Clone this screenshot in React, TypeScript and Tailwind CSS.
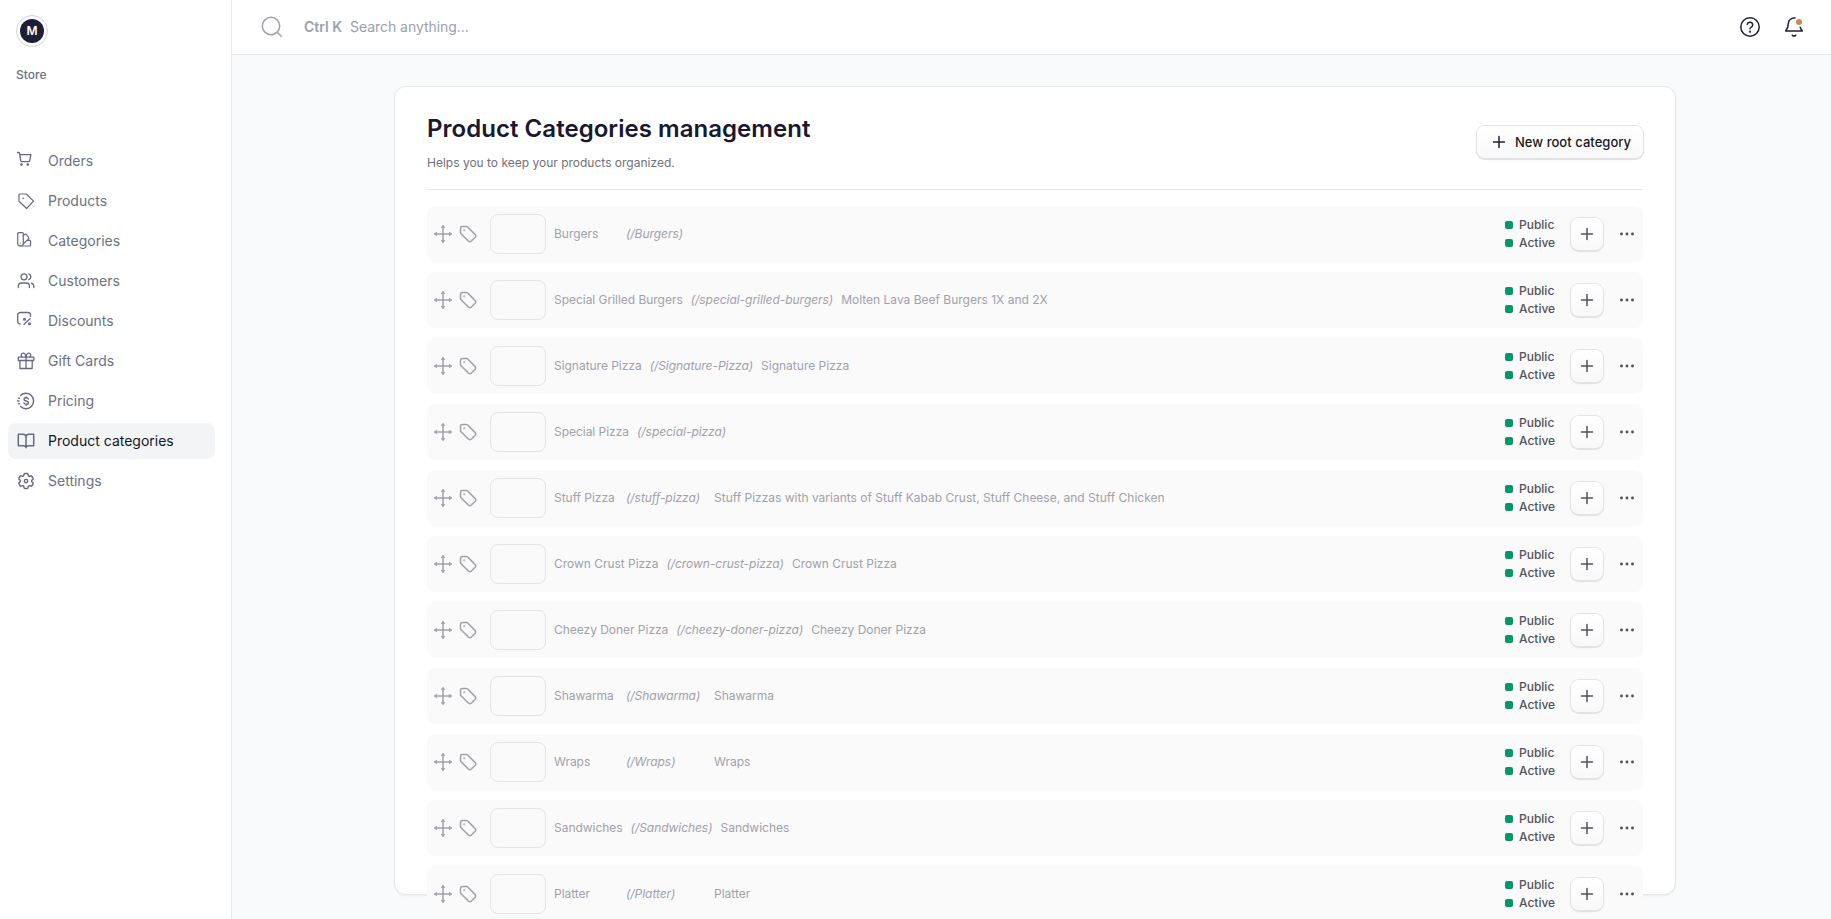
import type { ReactNode } from 'react';

interface Category {
  name: string;
  handle: string;
  description?: string;
}

const CATEGORIES: Category[] = [
  { name: 'Burgers', handle: 'Burgers' },
  { name: 'Special Grilled Burgers', handle: 'special-grilled-burgers', description: 'Molten Lava Beef Burgers 1X and 2X' },
  { name: 'Signature Pizza', handle: 'Signature-Pizza', description: 'Signature Pizza' },
  { name: 'Special Pizza', handle: 'special-pizza' },
  {
    name: 'Stuff Pizza',
    handle: 'stuff-pizza',
    description: 'Stuff Pizzas with variants of Stuff Kabab Crust, Stuff Cheese, and Stuff Chicken',
  },
  { name: 'Crown Crust Pizza', handle: 'crown-crust-pizza', description: 'Crown Crust Pizza' },
  { name: 'Cheezy Doner Pizza', handle: 'cheezy-doner-pizza', description: 'Cheezy Doner Pizza' },
  { name: 'Shawarma', handle: 'Shawarma', description: 'Shawarma' },
  { name: 'Wraps', handle: 'Wraps', description: 'Wraps' },
  { name: 'Sandwiches', handle: 'Sandwiches', description: 'Sandwiches' },
  { name: 'Platter', handle: 'Platter', description: 'Platter' },
];

interface IconProps {
  size?: number;
  viewBox?: string;
  strokeWidth?: number;
  className?: string;
  children: ReactNode;
}

function Icon({ size = 20, viewBox = '0 0 20 20', strokeWidth = 1.5, className = '', children }: IconProps) {
  return (
    <svg
      width={size}
      height={size}
      viewBox={viewBox}
      fill="none"
      stroke="currentColor"
      strokeWidth={strokeWidth}
      strokeLinecap="round"
      strokeLinejoin="round"
      className={`shrink-0 ${className}`}
    >
      {children}
    </svg>
  );
}

const NAV_ITEMS: { label: string; icon: ReactNode; active?: boolean }[] = [
  {
    label: 'Orders',
    icon: (
      <Icon strokeWidth={1.3}>
        <path d="M1.5 1.5h1.200c.4 0 .7.3.8.7L4.800 9.800c.1.5.5.800 1 .8h6.800c.5 0 .9-.3 1-.8l1.300-6.100H3.800" />
        <circle cx="5.500" cy="13.500" r=".7" fill="currentColor" />
        <circle cx="11.800" cy="13.500" r=".7" fill="currentColor" />
      </Icon>
    ),
  },
  {
    label: 'Products',
    icon: (
      <Icon strokeWidth={1.2}>
        <path d="M3 3h7.300l7.200 7.200-6.900 7.300L3 10.300V3z" />
        <circle cx="7.300" cy="7.300" r=".3" fill="currentColor" />
      </Icon>
    ),
  },
  {
    label: 'Categories',
    icon: (
      <Icon strokeWidth={1.2}>
        <path d="M2.600 1.700h3.800c.5 0 .9.4.9.9v9.600a2.800 2.800 0 0 1-5.600 0V2.600c0-.5.4-.9.900-.9z" />
        <path d="M7.300 4.500l1.800-1.200c.4-.3 1-.2 1.300.2l2.300 3.100c.3.400.2 1-.2 1.300L7.300 13M4.500 15h9.200c.5 0 .9-.4.900-.9v-3.800c0-.5-.4-.9-.9-.9h-2.500" />
        <circle cx="4.500" cy="12.200" r=".2" />
      </Icon>
    ),
  },
  {
    label: 'Customers',
    icon: (
      <Icon strokeWidth={1.3}>
        <circle cx="8" cy="5.800" r="3" />
        <path d="M2.300 16.500v-1.200a3.300 3.300 0 0 1 3.300-3.300h4.600a3.300 3.300 0 0 1 3.300 3.300v1.200M12.800 2.900a3 3 0 0 1 0 5.700M15.300 12.100a3.300 3.300 0 0 1 2.500 3.200v1.200" />
      </Icon>
    ),
  },
  {
    label: 'Discounts',
    icon: (
      <Icon strokeWidth={1.3}>
        <path d="M4 13c-1.300-.2-2.300-1.300-2.300-2.700V4.100c0-1.400 1.200-2.600 2.600-2.600h7.600c1.400 0 2.600 1.200 2.600 2.600v1.200M8 13.300l6-5.600" />
        <circle cx="8.500" cy="8.300" r=".9" />
        <circle cx="13.500" cy="12.800" r=".9" />
      </Icon>
    ),
  },
  {
    label: 'Gift Cards',
    icon: (
      <Icon strokeWidth={1.300}>
        <path d="M2.300 6.200h15.500v3.300H2.300zM3.900 9.500h12.300v8H3.900zM10 6.200v11.300M10 6.200H7.300a2 2 0 1 1 0-4C9.300 2.200 10 6.200 10 6.200zM10 6.200h2.700a2 2 0 1 0 0-4C10.700 2.200 10 6.200 10 6.200z" />
      </Icon>
    ),
  },
  {
    label: 'Pricing',
    icon: (
      <Icon strokeWidth={1.400}>
        <path d="M4.600 4.400a7.700 7.700 0 1 1 0 11.200M2.500 7.200h1M1.500 10h1.500M2.500 12.800h1" />
        <path d="M12.300 8c-.3-.8-1.100-1.200-2.100-1.200-1.200 0-2.100.6-2.100 1.600 0 2.300 4.400 1 4.400 3.300 0 1-1 1.600-2.200 1.600-1.100 0-2-.5-2.300-1.300M10.200 5.900v.9M10.200 13.300v.9" />
      </Icon>
    ),
  },
  {
    label: 'Product categories',
    active: true,
    icon: (
      <Icon>
        <path d="M2.300 3.300H7a3 3 0 0 1 3 2.500v11c0-1.200-1-2-2.300-2H2.300zM17.700 3.300H13a3 3 0 0 0-3 2.500v11c0-1.200 1-2 2.300-2h5.400z" />
      </Icon>
    ),
  },
  {
    label: 'Settings',
    icon: (
      <Icon viewBox="0 0 24 24" strokeWidth={1.700}>
        <path d="M9.594 3.940c.09-.542.560-.940 1.110-.940h2.593c.550 0 1.020.398 1.110.940l.213 1.281c.063.374.313.686.645.870.074.040.147.083.220.127.324.196.720.257 1.075.124l1.217-.456a1.125 1.125 0 0 1 1.370.490l1.296 2.247a1.125 1.125 0 0 1-.260 1.431l-1.003.827c-.293.240-.438.613-.431.992a6.759 6.759 0 0 1 0 .255c-.007.378.138.750.430.990l1.005.828c.424.350.534.954.260 1.430l-1.298 2.247a1.125 1.125 0 0 1-1.369.491l-1.217-.456c-.355-.133-.750-.072-1.076.124a6.570 6.570 0 0 1-.220.128c-.331.183-.581.495-.644.869l-.213 1.280c-.090.543-.560.941-1.110.941h-2.594c-.550 0-1.020-.398-1.110-.940l-.213-1.281c-.062-.374-.312-.686-.644-.870a6.520 6.520 0 0 1-.220-.127c-.325-.196-.720-.257-1.076-.124l-1.217.456a1.125 1.125 0 0 1-1.369-.490l-1.297-2.247a1.125 1.125 0 0 1 .260-1.431l1.004-.827c.292-.240.437-.613.430-.992a6.932 6.932 0 0 1 0-.255c.007-.378-.138-.750-.430-.990l-1.004-.828a1.125 1.125 0 0 1-.260-1.430l1.297-2.247a1.125 1.125 0 0 1 1.370-.491l1.216.456c.356.133.751.072 1.076-.124.072-.044.146-.087.220-.128.332-.183.582-.495.644-.869l.214-1.281Z" />
        <circle cx="12" cy="12" r="2" />
      </Icon>
    ),
  },
];

function Sidebar() {
  return (
    <aside className="h-full w-[232px] shrink-0 border-r border-gray-200 bg-white">
      <div className="px-4 pt-[15px]">
        <div className="flex size-8 items-center justify-center rounded-full border border-gray-300">
          <div className="flex size-6 items-center justify-center rounded-full bg-[#1e1e38] text-xs font-semibold text-white">
            M
          </div>
        </div>
        <div className="mt-5 text-xs leading-4 font-medium text-gray-500">Store</div>
      </div>
      <nav className="mt-[60px] flex flex-col gap-1 pr-4 pl-2">
        {NAV_ITEMS.map((item) => (
          <a
            key={item.label}
            className={`flex h-9 items-center rounded-lg px-2 text-sm ${
              item.active ? 'bg-gray-100 text-gray-900' : 'text-gray-500'
            }`}
          >
            <span className="text-[#686886]">{item.icon}</span>
            <span className="ml-3">{item.label}</span>
          </a>
        ))}
      </nav>
    </aside>
  );
}

function Topbar() {
  return (
    <header className="flex h-[55px] shrink-0 items-center justify-between border-b border-gray-200 bg-white pr-[25px] pl-7">
      <div className="flex items-center text-sm text-gray-400">
        <Icon size={24} viewBox="0 0 24 24" className="text-[#a1a1aa]">
          <circle cx="11" cy="11" r="8.700" />
          <path d="M21.300 21.300l-4-4" />
        </Icon>
        <span className="ml-5 font-semibold">Ctrl K</span>
        <span className="ml-2 tracking-[-0.05px]">Search anything...</span>
      </div>
      <div className="flex items-center gap-5 text-[#1e1e38]">
        <Icon size={24} viewBox="0 0 24 24">
          <circle cx="12" cy="12" r="9.200" />
          <path d="M9.200 9.400a2.800 2.800 0 0 1 5.500.7c0 1.900-2.700 2.300-2.700 3.700" />
          <circle cx="12" cy="16.700" r=".4" fill="currentColor" />
        </Icon>
        <div className="relative">
          <Icon size={24} viewBox="0 0 24 24">
            <path d="M13 3c-4-.4-6.700 2.300-6.700 5.800 0 3.300-.8 5-2.600 7.200h16.600c-1-1.200-1.700-2.400-2.100-3.700M10.300 20.300c1 .8 2.400.8 3.400 0" />
          </Icon>
          <span className="absolute top-1 right-1 size-1.5 rounded-full bg-[#cd8555]" />
        </div>
      </div>
    </header>
  );
}

function StatusLabel({ label }: { label: string }) {
  return (
    <div className="flex h-[18px] items-center gap-1.5 text-xs font-medium text-[#52525b]">
      <span className="size-2 rounded-[2px] bg-[#059669]" />
      {label}
    </div>
  );
}

function CategoryRow({ category }: { category: Category }) {
  return (
    <div className="flex h-14 shrink-0 items-center rounded-lg bg-[#fafafa] pl-1.5">
      <Icon className="text-[#a1a1aa]">
        <path d="M10 1.700v16.600M1.700 10h16.600" />
        <path d="M8.300 3.300l1.700-1.600 1.700 1.600zM8.300 16.700l1.700 1.600 1.700-1.600zM3.300 8.300l-1.600 1.700 1.600 1.700zM16.700 8.300l1.600 1.700-1.600 1.700z" fill="currentColor" strokeWidth={0.7} />
      </Icon>
      <Icon className="ml-[5px] text-[#a1a1aa]">
        <path d="M2.500 4.400v4c0 .5.200 1 .5 1.300l7.600 7.500c.7.700 1.900.7 2.600 0l4-4c.7-.7.7-1.900 0-2.600L9.700 3c-.4-.3-.8-.5-1.300-.5h-4c-1 0-1.900.8-1.900 1.900z" />
        <circle cx="6.300" cy="6.300" r=".3" fill="currentColor" />
      </Icon>
      <div className="ml-3 h-10 w-14 shrink-0 rounded-lg border border-[#e4e4e7]" />
      <div className="ml-2 flex grow items-center gap-2 text-xs text-[#a1a1aa]">
        <span className="min-w-16 tracking-[-0.03px]">{category.name}</span>
        <span className="min-w-20 tracking-[-0.05px] italic">(/{category.handle})</span>
        <span>{category.description}</span>
      </div>
      <div className="w-[66px]">
        <StatusLabel label="Public" />
        <StatusLabel label="Active" />
      </div>
      <button className="flex size-8 items-center justify-center rounded-lg bg-linear-to-b from-white to-[#f9f9f9] text-[#52525b] shadow-[0_0_0_1px_#e4e4e7,0_1px_1px_1px_#e0e0e3]">
        <Icon>
          <path d="M10 4.500v11M4.500 10h11" />
        </Icon>
      </button>
      <button className="ml-2 flex size-8 items-center justify-center text-[#52525b]">
        <Icon>
          <circle cx="4.500" cy="10" r=".7" fill="currentColor" />
          <circle cx="10" cy="10" r=".7" fill="currentColor" />
          <circle cx="15.500" cy="10" r=".7" fill="currentColor" />
        </Icon>
      </button>
    </div>
  );
}

export default function App() {
  return (
    <div className="flex h-screen overflow-hidden bg-gray-50 font-['Inter',sans-serif]">
      <Sidebar />
      <div className="flex min-w-0 grow flex-col">
        <Topbar />
        <main className="pt-[31px] pl-[162px]">
          <section className="flex h-[809px] w-[1282px] flex-col rounded-xl border border-gray-200 bg-white px-8 pt-6 shadow-xs">
            <div className="flex items-start justify-between border-b border-gray-200 pb-[18px]">
              <div>
                <h1 className="text-2xl leading-9 font-semibold tracking-[0.04px] text-[#18182f]">
                  Product Categories management
                </h1>
                <p className="mt-2 text-xs leading-4 text-[#71717a]">Helps you to keep your products organized.</p>
              </div>
              <button className="mt-[15px] flex h-8 w-[166px] items-center rounded-lg bg-linear-to-b from-white to-[#f9f9f9] pl-3 text-[13px] font-medium text-[#18181b] shadow-[0_0_0_1px_#e4e4e7,0_1px_1px_1px_#e0e0e3]">
                <Icon className="text-[#1e1e38]">
                  <path d="M10 4.500v11M4.500 10h11" />
                </Icon>
                <span className="ml-1.5 pt-0.5 tracking-[0.04px]">New root category</span>
              </button>
            </div>
            <div className="mt-4 flex flex-col gap-2.5">
              {CATEGORIES.map((category) => (
                <CategoryRow key={category.handle} category={category} />
              ))}
            </div>
          </section>
        </main>
      </div>
    </div>
  );
}
